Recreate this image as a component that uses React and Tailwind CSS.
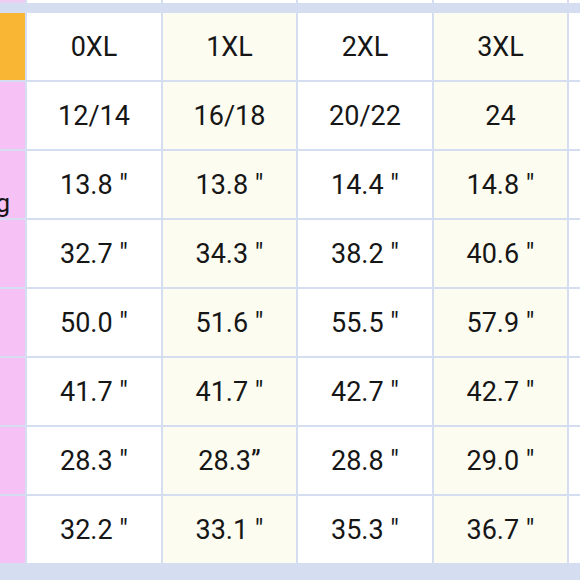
const sizes = ["0XL", "1XL", "2XL", "3XL"];

const rows = [
  ["12/14", "16/18", "20/22", "24"],
  ["13.8 \"", "13.8 \"", "14.4 \"", "14.8 \""],
  ["32.7 \"", "34.3 \"", "38.2 \"", "40.6 \""],
  ["50.0 \"", "51.6 \"", "55.5 \"", "57.9 \""],
  ["41.7 \"", "41.7 \"", "42.7 \"", "42.7 \""],
  ["28.3 \"", "28.3\u201d", "28.8 \"", "29.0 \""],
  ["32.2 \"", "33.1 \"", "35.3 \"", "36.7 \""],
];

const colBg = ["bg-white", "bg-[#fdfcf1]", "bg-white", "bg-[#fdfcf1]"];

export default function App() {
  return (
    <div
      className="w-[580px] h-[580px] overflow-hidden bg-[#d5ddf1] text-[#161616]"
      style={{ fontFamily: "Roboto, 'Noto Sans', sans-serif" }}
    >
      {/* sliver of the row above */}
      <div className="grid grid-cols-[25px_134px_133px_134px_133px_20px] gap-x-[2px] h-[3px]">
        <div className="bg-[#eccdf3]" />
        <div className="bg-white" />
        <div className="bg-white" />
        <div className="bg-white" />
        <div className="bg-white" />
        <div className="bg-white" />
      </div>

      <div className="mt-[10px] grid grid-cols-[25px_134px_133px_134px_133px_20px] auto-rows-[67px] gap-[2px]">
        {/* header */}
        <div className="bg-[#f9b534]" />
        {sizes.map((s, i) => (
          <div key={s} className={`${colBg[i]} flex items-center justify-center text-[27px] pt-[1px]`}>
            {s}
          </div>
        ))}
        <div className="bg-white" />

        {rows.map((r, ri) => (
          <Row key={ri} values={r} label={ri === 1 ? "Sleeve Long" : null} />
        ))}
      </div>
    </div>
  );
}

function Row({ values, label }) {
  return (
    <>
      <div className="bg-[#f6c1f4] flex justify-end items-end overflow-hidden pr-[15px] pb-[2px]">
        {label && <span className="whitespace-nowrap text-[26px] leading-none">{label}</span>}
      </div>
      {values.map((v, i) => (
        <div key={i} className={`${colBg[i]} flex items-center justify-center text-[27px] whitespace-pre pt-[2px]`}>
          {v}
        </div>
      ))}
      <div className="bg-white" />
    </>
  );
}
